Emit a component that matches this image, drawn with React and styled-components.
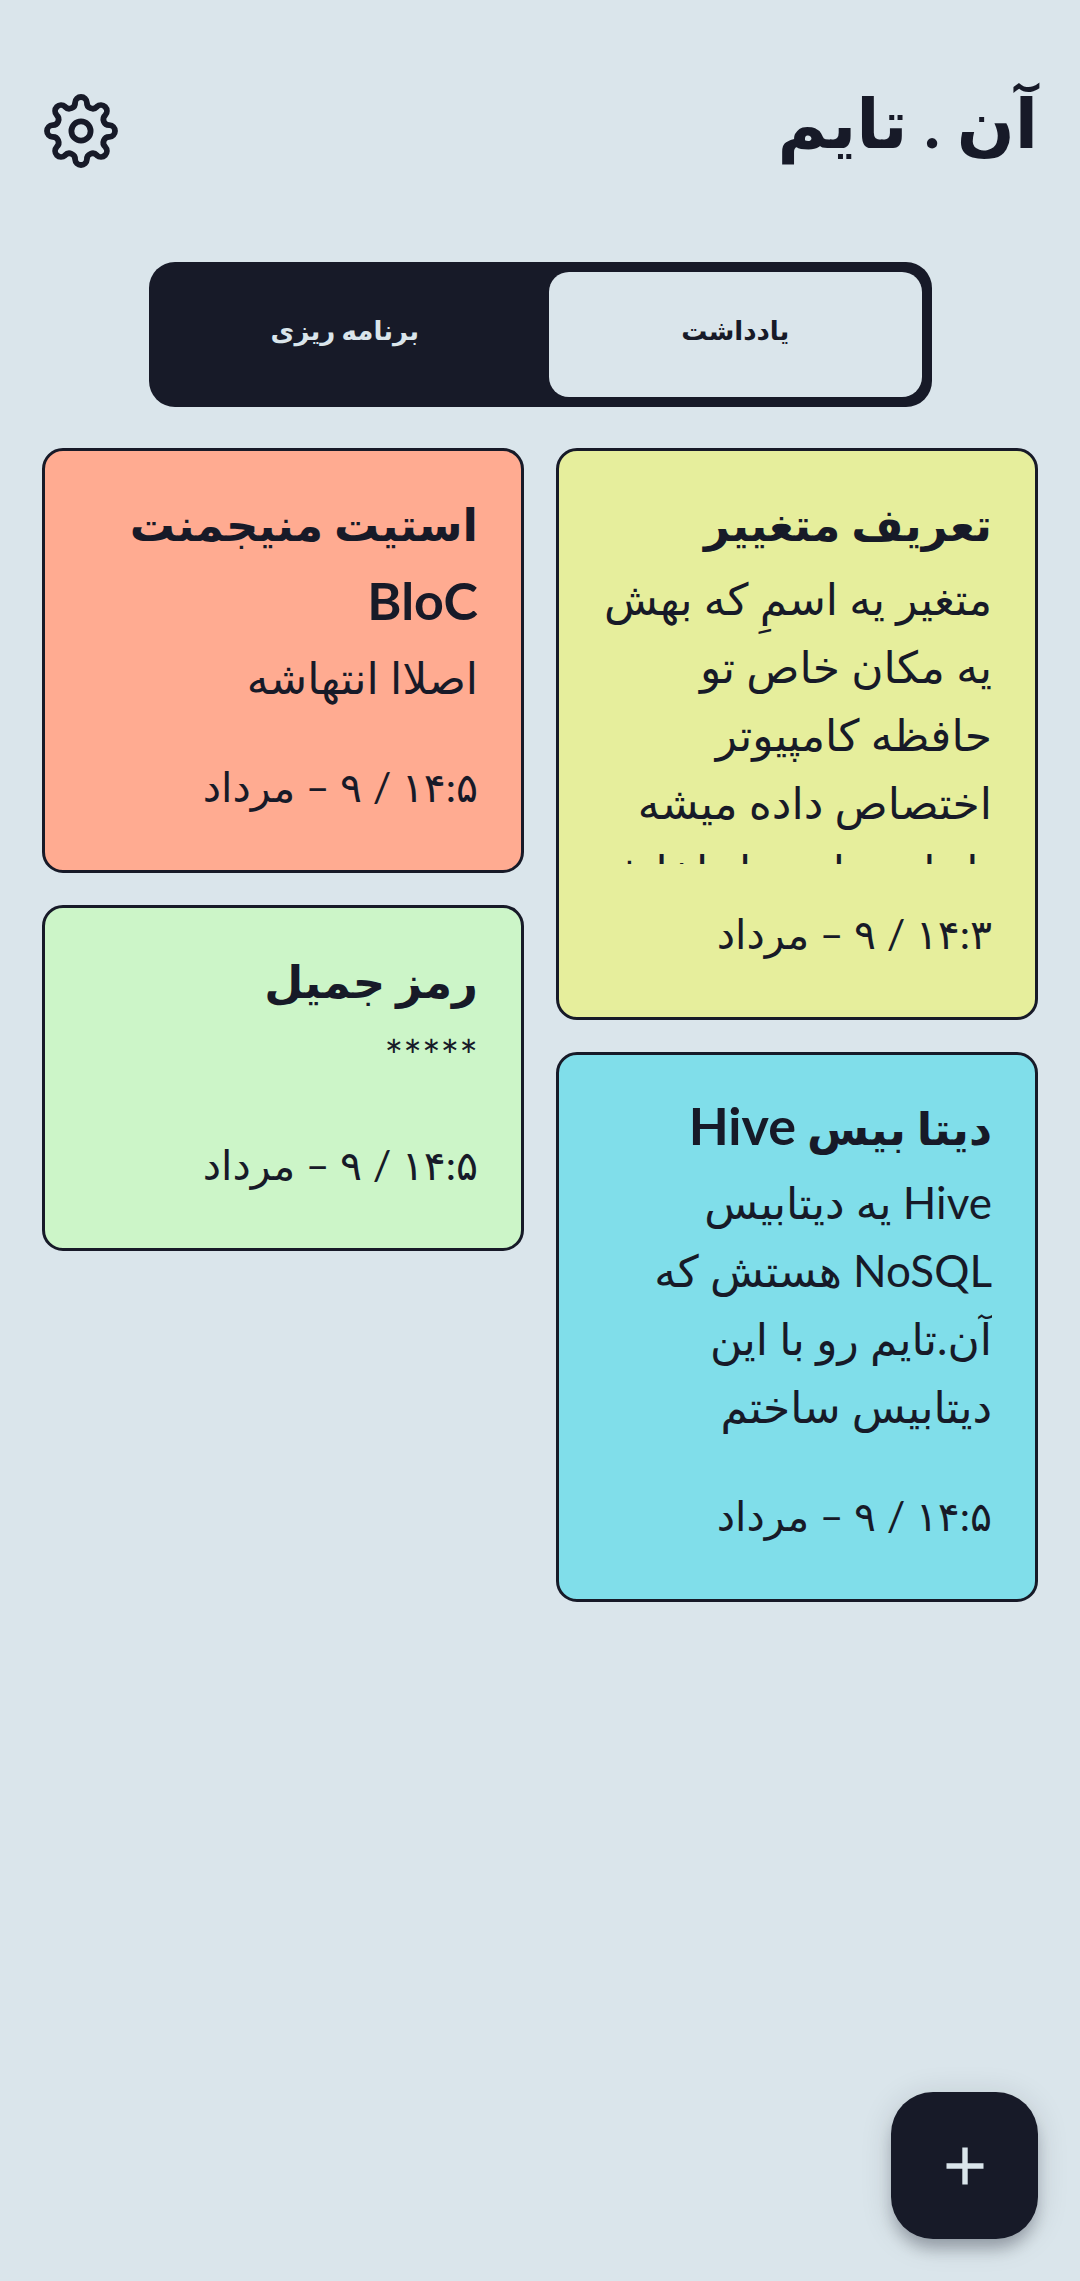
import React, { useState } from "react";
import styled, { createGlobalStyle } from "styled-components";

const ink = "#171a28";
const paper = "#dae5eb";

const GlobalStyle = createGlobalStyle`
  *, *::before, *::after { box-sizing: border-box; }
  body {
    margin: 0;
    background: ${paper};
    color: ${ink};
    font-family: Lato, "DejaVu Sans", sans-serif;
  }
  button { font: inherit; color: inherit; border: 0; padding: 0; cursor: pointer; }
  h1, h2, p { margin: 0; }
`;

const Page = styled.main`
  min-height: 100vh;
  padding: 72px 42px 232px;
`;

const Header = styled.header`
  display: flex;
  align-items: center;
  justify-content: space-between;
  height: 118px;
`;

const AppTitle = styled.h1`
  padding-bottom: 18px;
  font-size: 68px;
  line-height: 100px;
  font-weight: 700;
`;

const IconButton = styled.button`
  display: flex;
  padding: 1px;
  background: none;
`;

const Tabs = styled.nav`
  display: flex;
  gap: 18px;
  width: 783px;
  max-width: 100%;
  height: 145px;
  margin: 72px auto 0;
  padding: 10px;
  border-radius: 26px;
  background: ${ink};
`;

const Tab = styled.button`
  flex: 1;
  padding-bottom: 10px;
  border-radius: 20px;
  font-size: 26px;
  line-height: 40px;
  font-weight: 700;
  background: ${(p) => (p.$active ? paper : "transparent")};
  color: ${(p) => (p.$active ? ink : paper)};
`;

const Board = styled.section`
  display: grid;
  grid-template-columns: repeat(2, minmax(0, 1fr));
  align-items: start;
  gap: 32px;
  margin-top: 41px;
`;

const Column = styled.div`
  display: flex;
  flex-direction: column;
  gap: 32px;
`;

const Card = styled.article`
  padding: 34px 43px 49px;
  border: 3px solid ${ink};
  border-radius: 21px;
  background: ${(p) => p.$color};
`;

const CardTitle = styled.h2`
  font-size: 45px;
  line-height: 79px;
  font-weight: 700;
`;

const Latin = styled.bdi`
  font-size: 52px;
  line-height: 1;
`;

const CardBody = styled.p`
  max-height: 300px;
  padding-bottom: 6px;
  overflow: hidden;
  font-size: 44px;
  line-height: 68px;
`;

const Line = styled.span`
  display: block;
  height: ${(p) => p.$height}px;
  white-space: nowrap;
`;

const CardDate = styled.time`
  display: block;
  margin-top: 36px;
  font-size: 41px;
  line-height: 68px;
  white-space: nowrap;
`;

const AddButton = styled.button`
  position: fixed;
  right: 42px;
  bottom: 42px;
  display: grid;
  place-items: center;
  width: 147px;
  height: 147px;
  border-radius: 42px;
  background: ${ink};
  color: ${paper};
  box-shadow: 0 12px 16px -3px rgba(23, 26, 40, 0.3), 0 4px 32px rgba(23, 26, 40, 0.14);
`;

function gearPath() {
  const lobe = 5.9;
  const lobeDistance = 28.7;
  const valleyDistance = 30.5;
  const at = (r, deg) => {
    const a = (deg * Math.PI) / 180;
    return [38 + r * Math.sin(a), 38 - r * Math.cos(a)];
  };
  const touch = (from, to) => {
    const d = Math.hypot(to[0] - from[0], to[1] - from[1]);
    return {
      point: from.map((v, i) => (v + ((to[i] - v) * lobe) / d).toFixed(2)).join(" "),
      valley: (d - lobe).toFixed(2),
    };
  };
  let d = "";
  for (let i = 0; i < 8; i += 1) {
    const centre = at(lobeDistance, i * 45);
    const before = touch(centre, at(valleyDistance, i * 45 - 22.5));
    const after = touch(centre, at(valleyDistance, i * 45 + 22.5));
    d += i === 0 ? `M${before.point}` : `A${before.valley} ${before.valley} 0 0 0 ${before.point}`;
    d += `A${lobe} ${lobe} 0 0 1 ${after.point}`;
    if (i === 7) {
      const first = touch(at(lobeDistance, 0), at(valleyDistance, -22.5));
      d += `A${first.valley} ${first.valley} 0 0 0 ${first.point}Z`;
    }
  }
  return d;
}

const gear = gearPath();

const GearIcon = () => (
  <svg width="76" height="76" viewBox="0 0 76 76" fill="none" stroke="currentColor" strokeWidth="5.8" aria-hidden="true">
    <path d={gear} />
    <circle cx="38" cy="38" r="9.6" />
  </svg>
);

const PlusIcon = () => (
  <svg width="38" height="38" viewBox="0 0 38 38" stroke="currentColor" strokeWidth="5.4" aria-hidden="true">
    <path d="M19 0.5V37.5M0.5 19H37.5" />
  </svg>
);

const columns = [
  [
    {
      color: "#e6ee9c",
      title: ["تعریف متغییر"],
      body: ["متغیر یه اسمِ که بهش", "یه مکان خاص تو", "حافظه کامپیوتر", "اختصاص داده میشه", "تا داده هایی را داخلش"],
      date: "۱۴:۳ / ۹ – مرداد",
    },
    {
      color: "#80deea",
      title: ["دیتا بیس Hive"],
      body: ["Hive یه دیتابیس", "NoSQL هستش که", "آن.تایم رو با این", "دیتابیس ساختم"],
      date: "۱۴:۵ / ۹ – مرداد",
    },
  ],
  [
    {
      color: "#ffab91",
      title: ["استیت منیجمنت", "BloC"],
      body: ["اصلاا انتهاشه"],
      date: "۱۴:۵ / ۹ – مرداد",
    },
    {
      color: "#ccf5c8",
      title: ["رمز جمیل"],
      body: ["*****"],
      date: "۱۴:۵ / ۹ – مرداد",
    },
  ],
];

const withLatin = (text) =>
  text.split(/([A-Za-z]+)/).map((part, i) => (i % 2 ? <Latin key={i}>{part}</Latin> : part));

const Note = ({ note }) => (
  <Card $color={note.color}>
    <CardTitle>
      {note.title.map((text) => (
        <Line key={text} $height={79}>{withLatin(text)}</Line>
      ))}
    </CardTitle>
    <CardBody>
      {note.body.map((text) => (
        <Line key={text} $height={68}>{text}</Line>
      ))}
    </CardBody>
    <CardDate>{note.date}</CardDate>
  </Card>
);

export default function App() {
  const [tab, setTab] = useState("notes");
  return (
    <Page dir="rtl" lang="fa">
      <GlobalStyle />
      <Header>
        <AppTitle>آن . تایم</AppTitle>
        <IconButton type="button" aria-label="تنظیمات">
          <GearIcon />
        </IconButton>
      </Header>
      <Tabs>
        <Tab type="button" $active={tab === "notes"} onClick={() => setTab("notes")}>
          یادداشت
        </Tab>
        <Tab type="button" $active={tab === "plans"} onClick={() => setTab("plans")}>
          برنامه ریزی
        </Tab>
      </Tabs>
      <Board>
        {columns.map((notes) => (
          <Column key={notes[0].title[0]}>
            {notes.map((note) => (
              <Note key={note.title[0]} note={note} />
            ))}
          </Column>
        ))}
      </Board>
      <AddButton type="button" aria-label="افزودن یادداشت">
        <PlusIcon />
      </AddButton>
    </Page>
  );
}
